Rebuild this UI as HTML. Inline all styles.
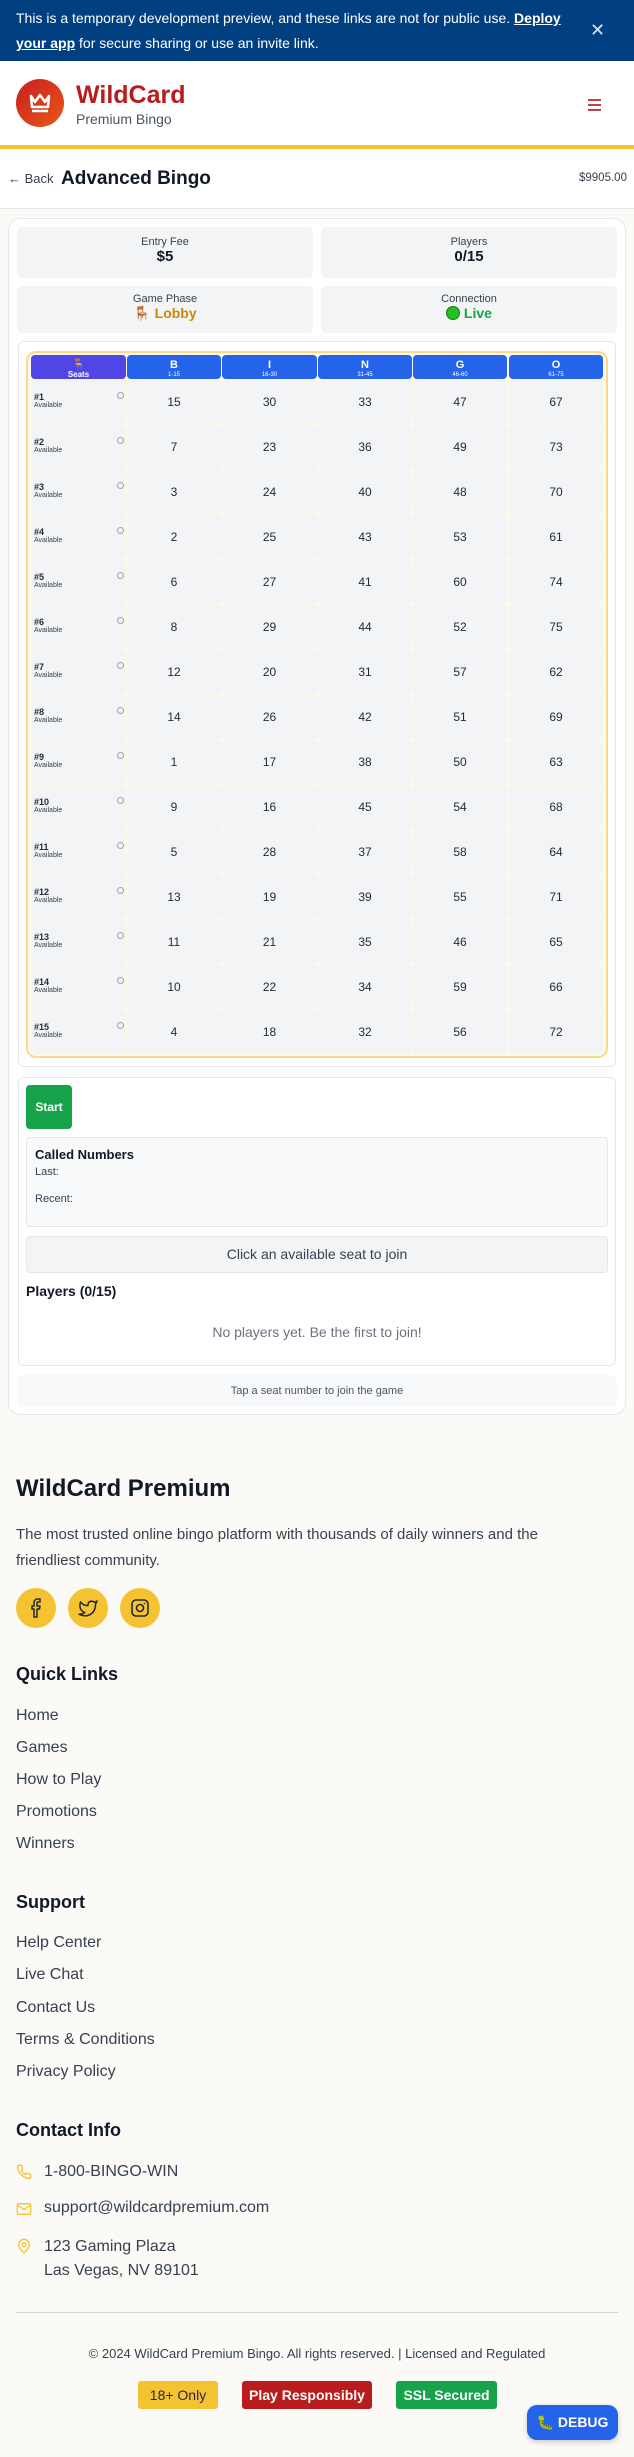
<!DOCTYPE html>
<html><head><meta charset="utf-8"><style>
*{box-sizing:border-box;margin:0;padding:0}
body{width:634px;height:2457px;background:#fbfaf7;font-family:"Liberation Sans",sans-serif;color:#111827;position:relative;overflow:hidden}
.a{position:absolute}
.banner{left:0;top:0;width:634px;height:61px;background:#003f80;color:#fff;font-size:14px;line-height:25px;padding:6px 60px 0 16px}
.banner u{font-weight:bold}
.hdr{left:0;top:61px;width:634px;height:84px;background:#fff}
.yl{left:0;top:145px;width:634px;height:4px;background:#f5c232}
.tbar{left:0;top:149px;width:634px;height:60px;background:#fff;border-bottom:1px solid #e5e7eb}
.card{left:8px;top:218px;width:618px;height:1197px;background:#fff;border:1px solid #e5e7eb;border-radius:12px}
.stat{background:#f3f4f6;border-radius:5px;text-align:center}
.stat .l{font-size:11px;color:#374151}
.stat .v{font-size:15px;font-weight:bold}
.cell{position:absolute;background:#f3f4f6;border-radius:4px;font-size:12px;color:#1f2937;text-align:center}
.hc{position:absolute;background:#2563eb;border-radius:4px;color:#fff;text-align:center;font-weight:bold;font-size:11px;line-height:11px;padding-top:5px}
.hc small{display:block;font-size:6px;line-height:8px;font-weight:normal}
.fl{font-size:16px;color:#374151;left:16px}
.fh{font-size:18px;font-weight:bold;left:16px}
.soc{width:40px;height:40px;border-radius:50%;background:#f5c232;top:1588px}
.bd{top:2381px;height:28px;border-radius:3px;font-size:14px;font-weight:bold;text-align:center;line-height:28px}
</style></head><body>
<div class="a banner">This is a temporary development preview, and these links are not for public use. <u>Deploy your app</u> for secure sharing or use an invite link.</div>
<div class="a" style="left:590px;top:20px;color:#dbe4f0;font-size:18px">✕</div>
<div class="a hdr"></div>
<div class="a" style="left:16px;top:79px;width:48px;height:48px;border-radius:50%;background:linear-gradient(135deg,#c81e1e,#e8581a)">
<svg width="48" height="48" viewBox="0 0 48 48"><path d="M15 17 L19 23 L24 16 L29 23 L33 17 L32 28 H16 Z" fill="none" stroke="#fff" stroke-width="2.5" stroke-linejoin="round"/><path d="M16 32 H32" stroke="#fff" stroke-width="2.5"/></svg></div>
<div class="a" style="left:76px;top:81px;font-size:25px;font-weight:bold;color:#b91c1c">WildCard</div>
<div class="a" style="left:76px;top:111px;font-size:14px;color:#4b5563">Premium Bingo</div>
<div class="a" style="left:588px;top:99px;width:13px"><div style="height:2px;background:#c0424a;margin-bottom:3px"></div><div style="height:2px;background:#c0424a;margin-bottom:3px"></div><div style="height:2px;background:#c0424a"></div></div>
<div class="a yl"></div>
<div class="a tbar"></div>
<div class="a" style="left:8px;top:171px;font-size:13px;color:#374151">← Back</div>
<div class="a" style="left:61px;top:168px;font-size:19px;font-weight:bold">Advanced Bingo</div>
<div class="a" style="left:579px;top:172px;font-size:11.5px;color:#374151">$9905.00</div>

<div class="a card"></div>
<div class="a stat" style="left:17px;top:227px;width:296px;height:51px;padding-top:9px"><div class="l">Entry Fee</div><div class="v">$5</div></div>
<div class="a stat" style="left:321px;top:227px;width:296px;height:51px;padding-top:9px"><div class="l">Players</div><div class="v">0/15</div></div>
<div class="a stat" style="left:17px;top:286px;width:296px;height:47px;padding-top:7px"><div class="l">Game Phase</div><div class="v" style="color:#ca8a04;font-size:14px">🪑 Lobby</div></div>
<div class="a stat" style="left:321px;top:286px;width:296px;height:47px;padding-top:7px"><div class="l">Connection</div><div class="v" style="color:#16a34a;font-size:14px"><span style="display:inline-block;width:14px;height:14px;border-radius:50%;background:#22c020;border:1px solid #157a15;vertical-align:-2px"></span> Live</div></div>

<div class="a" style="left:18px;top:341px;width:598px;height:726px;border:1px solid #e5e7eb;border-radius:6px"></div>
<div class="a" style="left:26px;top:351px;width:582px;height:707px;border:2px solid #fcd98a;border-radius:10px;background:#fdf8ec"></div>
<div class="hc" style="left:31px;top:355px;width:95px;height:24px;background:#4f46e5">🪑<small style="font-size:8px;font-weight:bold">Seats</small></div>
<div class="hc" style="left:127px;top:355px;width:94px;height:24px">B<small>1-15</small></div>
<div class="hc" style="left:222px;top:355px;width:95px;height:24px">I<small>16-30</small></div>
<div class="hc" style="left:318px;top:355px;width:94px;height:24px">N<small>31-45</small></div>
<div class="hc" style="left:413px;top:355px;width:94px;height:24px">G<small>46-60</small></div>
<div class="hc" style="left:509px;top:355px;width:94px;height:24px">O<small>61-75</small></div>
<div id="g"></div>
<script>
var d=[[15,30,33,47,67],[7,23,36,49,73],[3,24,40,48,70],[2,25,43,53,61],[6,27,41,60,74],[8,29,44,52,75],[12,20,31,57,62],[14,26,42,51,69],[1,17,38,50,63],[9,16,45,54,68],[5,28,37,58,64],[13,19,39,55,71],[11,21,35,46,65],[10,22,34,59,66],[4,18,32,56,72]];
var xs=[[127,94],[222,95],[318,94],[413,94],[509,94]],h='';
for(var r=0;r<15;r++){var y=380+r*45;
h+='<div class="cell" style="left:31px;top:'+y+'px;width:95px;height:44px;text-align:left;padding:13px 0 0 3px"><div style="font-size:9px;font-weight:bold;line-height:9px">#'+(r+1)+'</div><div style="font-size:7px;color:#374151;line-height:8px">Available</div><div style="position:absolute;left:86px;top:12px;width:7px;height:7px;border:1px solid #9ca3af;border-radius:50%"></div></div>';
for(var c=0;c<5;c++)h+='<div class="cell" style="left:'+xs[c][0]+'px;top:'+y+'px;width:'+xs[c][1]+'px;height:44px;line-height:44px">'+d[r][c]+'</div>';}
document.getElementById('g').innerHTML=h;
</script>

<div class="a" style="left:18px;top:1077px;width:598px;height:289px;border:1px solid #e5e7eb;border-radius:6px"></div>
<div class="a" style="left:26px;top:1085px;width:46px;height:44px;background:#16a34a;border-radius:4px;color:#fff;font-weight:bold;font-size:12px;text-align:center;line-height:44px">Start</div>
<div class="a" style="left:26px;top:1137px;width:582px;height:90px;background:#f8f9fa;border:1px solid #e5e7eb;border-radius:4px;padding:9px 8px"><div style="font-size:13px;font-weight:bold">Called Numbers</div><div style="font-size:11px;color:#374151;margin-top:4px">Last:</div><div style="font-size:11px;color:#374151;margin-top:15px">Recent:</div></div>
<div class="a" style="left:26px;top:1236px;width:582px;height:37px;background:#f3f4f6;border:1px solid #e5e7eb;border-radius:4px;font-size:14px;color:#374151;text-align:center;line-height:35px">Click an available seat to join</div>
<div class="a" style="left:26px;top:1283px;font-size:14px;font-weight:bold">Players (0/15)</div>
<div class="a" style="left:18px;top:1324px;width:598px;text-align:center;font-size:14px;color:#6b7280">No players yet. Be the first to join!</div>
<div class="a" style="left:17px;top:1375px;width:600px;height:32px;background:#f8f9fa;border-radius:6px;text-align:center;line-height:32px;font-size:11px;color:#4b5563">Tap a seat number to join the game</div>

<div class="a" style="left:16px;top:1475px;font-size:24px;font-weight:bold">WildCard Premium</div>
<div class="a" style="left:16px;top:1522px;width:580px;font-size:15px;line-height:26px;color:#374151">The most trusted online bingo platform with thousands of daily winners and the friendliest community.</div>
<div class="a soc" style="left:16px"><svg width="40" height="40" viewBox="0 0 40 40"><path d="M22 14h2v-3h-2.5a3.5 3.5 0 0 0-3.5 3.5V18h-2v3h2v8h3v-8h2.5l.5-3h-3v-3a1 1 0 0 1 1-1z" fill="none" stroke="#1f2937" stroke-width="1.5" stroke-linejoin="round"/></svg></div>
<div class="a soc" style="left:68px"><svg width="40" height="40" viewBox="0 0 40 40"><path d="M29 13a9 9 0 0 1-2.6 1.3 3.7 3.7 0 0 0-6.4 2.5v.8a8.8 8.8 0 0 1-7.4-3.7s-3.3 7.4 4.1 10.7a9.6 9.6 0 0 1-5.7 1.6c7.4 4.1 16.5 0 16.5-9.4a3.7 3.7 0 0 0-.1-.7A6.4 6.4 0 0 0 29 13z" fill="none" stroke="#1f2937" stroke-width="1.5" stroke-linejoin="round"/></svg></div>
<div class="a soc" style="left:120px"><svg width="40" height="40" viewBox="0 0 40 40"><rect x="12" y="12" width="16" height="16" rx="4" fill="none" stroke="#1f2937" stroke-width="1.6"/><circle cx="20" cy="20" r="3.5" fill="none" stroke="#1f2937" stroke-width="1.6"/><circle cx="24.5" cy="15.5" r=".8" fill="#1f2937"/></svg></div>

<div class="a fh" style="top:1664px">Quick Links</div>
<div class="a fl" style="top:1707px">Home</div>
<div class="a fl" style="top:1739px">Games</div>
<div class="a fl" style="top:1771px">How to Play</div>
<div class="a fl" style="top:1803px">Promotions</div>
<div class="a fl" style="top:1835px">Winners</div>
<div class="a fh" style="top:1892px">Support</div>
<div class="a fl" style="top:1934px">Help Center</div>
<div class="a fl" style="top:1966px">Live Chat</div>
<div class="a fl" style="top:1999px">Contact Us</div>
<div class="a fl" style="top:2031px">Terms &amp; Conditions</div>
<div class="a fl" style="top:2063px">Privacy Policy</div>
<div class="a fh" style="top:2120px">Contact Info</div>
<svg class="a" style="left:16px;top:2164px" width="16" height="16" viewBox="0 0 24 24"><path d="M22 16.9v3a2 2 0 0 1-2.2 2 19.8 19.8 0 0 1-8.6-3.1 19.5 19.5 0 0 1-6-6A19.8 19.8 0 0 1 2.1 4.2 2 2 0 0 1 4.1 2h3a2 2 0 0 1 2 1.7c.1 1 .4 1.9.7 2.8a2 2 0 0 1-.5 2.1L8 9.8a16 16 0 0 0 6 6l1.3-1.3a2 2 0 0 1 2.1-.4c.9.3 1.8.6 2.8.7a2 2 0 0 1 1.7 2z" fill="none" stroke="#f5c232" stroke-width="2"/></svg>
<div class="a fl" style="left:44px;top:2163px">1-800-BINGO-WIN</div>
<svg class="a" style="left:16px;top:2201px" width="16" height="16" viewBox="0 0 24 24"><rect x="2" y="4" width="20" height="16" rx="2" fill="none" stroke="#f5c232" stroke-width="2"/><path d="M2 6l10 7 10-7" fill="none" stroke="#f5c232" stroke-width="2"/></svg>
<div class="a fl" style="left:44px;top:2199px">support@wildcardpremium.com</div>
<svg class="a" style="left:16px;top:2237px" width="16" height="18" viewBox="0 0 24 24"><path d="M20 10c0 6-8 12-8 12s-8-6-8-12a8 8 0 0 1 16 0z" fill="none" stroke="#f5c232" stroke-width="2"/><circle cx="12" cy="10" r="3" fill="none" stroke="#f5c232" stroke-width="2"/></svg>
<div class="a fl" style="left:44px;top:2235px;line-height:24px">123 Gaming Plaza<br>Las Vegas, NV 89101</div>
<div class="a" style="left:16px;top:2312px;width:602px;height:1px;background:#d1d5db"></div>
<div class="a" style="left:0;top:2346px;width:634px;text-align:center;font-size:13px;color:#374151">© 2024 WildCard Premium Bingo. All rights reserved. | Licensed and Regulated</div>
<div class="a bd" style="left:138px;width:80px;background:#f5c232;color:#1f2937;font-weight:normal">18+ Only</div>
<div class="a bd" style="left:242px;width:130px;background:#b91c1c;color:#fff">Play Responsibly</div>
<div class="a bd" style="left:396px;width:101px;background:#16a34a;color:#fff">SSL Secured</div>
<div class="a" style="left:527px;top:2405px;width:91px;height:35px;background:#2563eb;border-radius:10px;color:#fff;font-weight:bold;font-size:14px;line-height:35px;text-align:center;box-shadow:0 2px 6px rgba(0,0,0,.2)">🐛 DEBUG</div>
</body></html>
